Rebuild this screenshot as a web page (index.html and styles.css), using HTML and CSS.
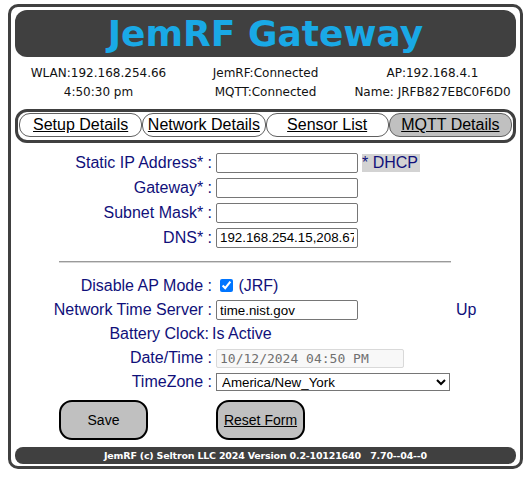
FILE: index.html
```html
<!DOCTYPE html>
<html>
<head>
<meta charset="utf-8">
<title>JemRF Gateway</title>
<link rel="stylesheet" href="styles.css">
</head>
<body>
<div class="frame">
  <header class="banner"><h1>JemRF Gateway</h1></header>
  <div class="info">
    <span>WLAN:192.168.254.66</span><span>JemRF:Connected</span><span>AP:192.168.4.1</span>
    <span>4:50:30 pm</span><span>MQTT:Connected</span><span>Name: JRFB827EBC0F6D0</span>
  </div>
  <nav class="tabs">
    <a class="tab" href="#">Setup Details</a>
    <a class="tab" href="#">Network Details</a>
    <a class="tab" href="#">Sensor List</a>
    <a class="tab tab-active" href="#">MQTT Details</a>
  </nav>
  <form class="form">
    <div class="grid g1">
      <label class="lbl">Static IP Address* :</label>
      <input class="txt" type="text">
      <span class="dhcp-cell"><span class="dhcp">* DHCP</span></span>
      <span></span>

      <label class="lbl">Gateway* :</label>
      <input class="txt" type="text">
      <span></span><span></span>

      <label class="lbl">Subnet Mask* :</label>
      <input class="txt" type="text">
      <span></span><span></span>

      <label class="lbl">DNS* :</label>
      <input class="txt" type="text" value="192.168.254.15,208.67.222.222">
      <span></span><span></span>
    </div>
    <hr class="rule">
    <div class="grid g2">
      <label class="lbl">Disable AP Mode :</label>
      <span class="val span3"><input class="chk" type="checkbox" checked> (JRF)</span>

      <label class="lbl">Network Time Server :</label>
      <input class="txt" type="text" value="time.nist.gov">
      <span></span>
      <span class="val up">Up</span>

      <label class="lbl lbl-tight">Battery Clock:</label>
      <span class="val span3 active">Is Active</span>

      <label class="lbl">Date/Time :</label>
      <span class="span3"><input class="date" type="text" value="10/12/2024 04:50 PM" readonly></span>

      <label class="lbl">TimeZone :</label>
      <select class="sel">
        <option>America/New_York</option>
      </select>
      <span></span>
    </div>
    <div class="actions">
      <button class="btn" type="button">Save</button>
      <button class="btn btn-reset" type="reset">Reset Form</button>
    </div>
  </form>
  <footer class="foot">JemRF (c) Seltron LLC 2024 Version 0.2-10121640   7.70--04--0</footer>
</div>
</body>
</html>
```

FILE: styles.css
```css
html, body {
  margin: 0;
  padding: 0;
  background: #ffffff;
}

body {
  font-family: "Liberation Sans", Arial, sans-serif;
}

.frame {
  margin: 4px 7px 0 8px;
  border: 3px solid #404040;
  border-radius: 10px;
  padding: 3px 4px 2px 4px;
}

.banner {
  background: #404040;
  border-radius: 12px;
  height: 47px;
}

.banner h1 {
  margin: 0;
  font-family: "DejaVu Sans", Verdana, sans-serif;
  font-weight: bold;
  font-size: 36px;
  line-height: 47px;
  text-align: center;
  color: #19a9e6;
}

.info {
  display: grid;
  grid-template-columns: 1fr 1fr 1fr;
  grid-auto-rows: 19px;
  padding-top: 7px;
  font-family: "DejaVu Sans", Verdana, sans-serif;
  font-size: 12px;
  line-height: 19px;
  color: #111;
  text-align: center;
}

.tabs {
  display: flex;
  margin-top: 7px;
  border: 3px solid #404040;
  border-radius: 12px;
  padding: 1px;
  height: 26px;
  box-sizing: content-box;
}

.tab {
  flex: 1;
  border: 1px solid #606060;
  border-radius: 11px;
  height: 22px;
  line-height: 22px;
  text-align: center;
  font-size: 16px;
  color: #000;
  text-decoration: underline;
  background: #fff;
}

.tab-active {
  background: #c0c0c0;
}

.form {
  padding-top: 7px;
  margin: 0;
}

.grid {
  display: grid;
  grid-template-columns: 198px 145px 92px auto;
  align-items: center;
}

.g1 {
  grid-auto-rows: 25px;
}

.g2 {
  grid-auto-rows: 24px;
  margin-top: 11px;
}

.lbl {
  text-align: right;
  padding-right: 1px;
  font-size: 16px;
  color: #10107a;
  white-space: nowrap;
}

.lbl-tight {
  padding-right: 4px;
}

.txt {
  margin: 0 0 0 3px;
  width: 142px;
  height: 20px;
  box-sizing: border-box;
  border: 1px solid #767676;
  border-radius: 2px;
  padding: 1px 3px;
  font-family: "Liberation Sans", Arial, sans-serif;
  font-size: 13.33px;
  color: #000;
  background: #fff;
}

.dhcp-cell {
  padding-left: 4px;
}

.dhcp {
  display: inline-block;
  background: #d3d3d3;
  color: #10107a;
  font-size: 16px;
  line-height: 18px;
  padding-right: 2px;
}

.rule {
  margin: 11px 0 0 44px;
  width: 392px;
  border: 0;
  border-top: 1px solid #9a9a9a;
  border-bottom: 1px solid #d6d6d6;
  height: 0;
}

.span3 {
  grid-column: 2 / 5;
}

.val {
  font-size: 16px;
  color: #10107a;
}

.active {
  margin-left: -1px;
}

.chk {
  width: 13px;
  height: 13px;
  margin: 0 1px 0 7px;
  vertical-align: -1px;
}

.up {
  padding-left: 6px;
}

.date {
  margin: 0 0 0 3px;
  width: 188px;
  height: 19px;
  box-sizing: border-box;
  border: 1px solid #d9d9d9;
  border-radius: 2px;
  background: #f8f8f8;
  padding: 0 3px;
  font-family: "DejaVu Sans Mono", monospace;
  font-size: 13px;
  color: #707070;
}

.sel {
  grid-column: 2 / 4;
  margin: 0 0 0 3px;
  width: 234px;
  height: 18px;
  box-sizing: border-box;
  border: 1px solid #767676;
  border-radius: 0;
  font-family: "Liberation Sans", Arial, sans-serif;
  font-size: 13.33px;
  color: #000;
  background: #fff;
  padding: 0 1px;
}

.actions {
  display: flex;
  gap: 68px;
  margin: 6px 0 0 44px;
}

.btn {
  width: 89px;
  height: 40px;
  border: 2px solid #000;
  border-radius: 13px;
  background: #c0c0c0;
  font-family: "Liberation Sans", Arial, sans-serif;
  font-size: 14px;
  color: #000;
  padding: 0;
}

.btn-reset {
  text-decoration: underline;
}

.foot {
  margin-top: 7px;
  height: 17px;
  line-height: 17px;
  background: #404040;
  border-radius: 8px;
  color: #fff;
  font-family: "DejaVu Sans", Verdana, sans-serif;
  font-weight: bold;
  font-size: 9.5px;
  letter-spacing: -0.2px;
  text-align: center;
  white-space: pre;
}
```
